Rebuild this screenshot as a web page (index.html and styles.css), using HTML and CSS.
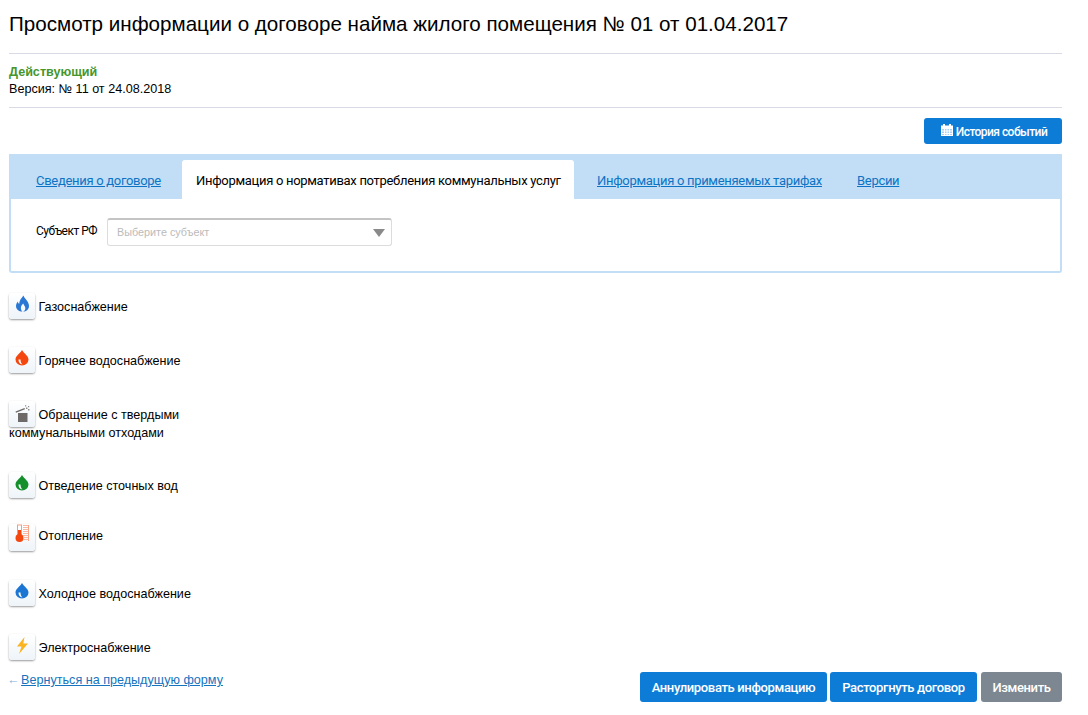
FILE: index.html
```html
<!DOCTYPE html>
<html lang="ru">
<head>
<meta charset="utf-8">
<title>Договор найма</title>
<link rel="stylesheet" href="styles.css">
</head>
<body>
<div class="page">
  <h1 class="title">Просмотр информации о договоре найма жилого помещения № 01 от 01.04.2017</h1>
  <div class="status">
    <div class="status-name">Действующий</div>
    <div class="status-version">Версия: № 11 от 24.08.2018</div>
  </div>
  <div class="actions-top">
    <a class="btn btn-small">
      <svg class="cal" viewBox="0 0 12 12" width="12" height="12"><path fill="#fff" d="M0 1.500h2V0h2v1.500h4V0h2v1.500h2V12H0z"/><path fill="#a9d0f2" d="M1 5h2v1.500H1zM4 5h1.500v1.500H4zM6.500 5H8v1.500H6.500zM9 5h2v1.500H9zM1 7.500h2V9H1zM4 7.500h1.500V9H4zM6.500 7.500H8V9H6.500zM9 7.500h2V9H9zM1 10h2v1H1zM4 10h1.500v1H4zM6.500 10H8v1H6.500zM9 10h2v1H9z"/></svg>
      История событий
    </a>
  </div>
  <section class="panel">
    <nav class="tabs">
      <a class="tab tab-link tab-1">Сведения о договоре</a>
      <span class="tab tab-active">Информация о нормативах потребления коммунальных услуг</span>
      <a class="tab tab-link tab-3">Информация о применяемых тарифах</a>
      <a class="tab tab-link tab-4">Версии</a>
    </nav>
    <div class="panel-body">
      <label class="field-label">Субъект РФ</label>
      <div class="select">
        <span class="select-text">Выберите субъект</span>
        <span class="select-arrow"></span>
      </div>
    </div>
  </section>
  <ul class="services">
    <li class="service">
      <span class="icon"><svg viewBox="0 0 26 26" width="26" height="26"><path fill="#2a78d4" d="M14.500 2.500c.5 3 5.500 5.500 5.500 10.500 0 3.300-2.500 5.500-6 5.800 1.700-1 2.700-2.600 2.200-4.600-.4-1.300-1.400-2.200-2-3.700-1.200 1.200-2.400 2.800-2.300 4.700.1 1.500.7 2.800 1.600 3.600C9.800 18.500 7 16.300 7 13c0-1.800 1-3.300 1.800-4.600.2 1.100.6 1.800 1.400 2.400C10.300 7.500 12.500 5 14.500 2.500z"/></svg></span>
      <span class="service-name">Газоснабжение</span>
    </li>
    <li class="service">
      <span class="icon"><svg viewBox="0 0 26 26" width="26" height="26"><path fill="#f4470f" d="M13 3c2.500 4 6.500 6 6.500 9.500a6.500 6 0 0 1-13 0C6.500 9 10.500 7 13 3z"/><path fill="#fff" d="M9.500 12.500c0 3 1.500 4.500 4 5-1.500-1.200-2-2.800-2-5z"/></svg></span>
      <span class="service-name">Горячее водоснабжение</span>
    </li>
    <li class="service">
      <span class="icon"><svg viewBox="0 0 26 26" width="26" height="26"><path fill="#6e6a6a" d="M9 12h9.500v9H9z"/><path fill="#6e6a6a" d="M6.500 10.500 15.500 7l.5 1.300-9 3.500z"/><path fill="#8f8b8b" d="M17 6.500h1.500V8H17zM19 8h1.500v1.500H19zM19 5h1.200v1.200H19zM16 4.200h1.200v1.200H16z"/></svg></span>
      <span class="service-name">Обращение с твердыми коммунальными отходами</span>
    </li>
    <li class="service">
      <span class="icon"><svg viewBox="0 0 26 26" width="26" height="26"><path fill="#14902b" d="M13 3c2.500 4 6.500 6 6.500 9.500a6.500 6 0 0 1-13 0C6.500 9 10.500 7 13 3z"/><path fill="#fff" d="M9.500 12.500c0 3 1.500 4.500 4 5-1.500-1.200-2-2.800-2-5z"/></svg></span>
      <span class="service-name">Отведение сточных вод</span>
    </li>
    <li class="service s-heat">
      <span class="icon"><svg viewBox="0 0 26 26" width="26" height="26"><rect x="8.500" y="1" width="4" height="10" fill="#fff" stroke="#f79b7c"/><rect x="9" y="6" width="3" height="7" fill="#f4470f"/><circle cx="10.500" cy="14" r="4" fill="#f4470f"/><path stroke="#f9b9a4" stroke-width="5" stroke-dasharray="1 1" fill="none" d="M16.500 1v16"/><path stroke="#f9a58a" stroke-width="1" fill="none" d="M19.500 1v16"/></svg></span>
      <span class="service-name">Отопление</span>
    </li>
    <li class="service">
      <span class="icon"><svg viewBox="0 0 26 26" width="26" height="26"><path fill="#1a76d2" d="M13 3c2.500 4 6.500 6 6.500 9.500a6.500 6 0 0 1-13 0C6.500 9 10.500 7 13 3z"/><path fill="#fff" d="M9.500 12.500c0 3 1.500 4.500 4 5-1.500-1.200-2-2.800-2-5z"/></svg></span>
      <span class="service-name">Холодное водоснабжение</span>
    </li>
    <li class="service">
      <span class="icon"><svg viewBox="0 0 26 26" width="26" height="26"><path fill="#fbb321" d="M15.500 3 8 12.500h4.500L10 20l9-10.500h-4.700z"/></svg></span>
      <span class="service-name">Электроснабжение</span>
    </li>
  </ul>
  <footer class="footer">
    <div class="back"><span class="back-arrow">←</span> <a class="back-link">Вернуться на предыдущую форму</a></div>
    <div class="footer-buttons">
      <a class="btn btn-large btn-annul">Аннулировать информацию</a>
      <a class="btn btn-large btn-cancel">Расторгнуть договор</a>
      <a class="btn btn-large btn-grey">Изменить</a>
    </div>
  </footer>
</div>
</body>
</html>
```
FILE: styles.css
```css
* { box-sizing: border-box; }
html, body { margin: 0; padding: 0; background: #fff; }
body { font-family: "Liberation Sans", Arial, sans-serif; font-size: 12.600px; color: #000; }
.page { width: 1062px; height: 715px; padding-left: 9px; overflow: hidden; }
.title {
  margin: 0; height: 54px; padding-top: 10px;
  font: 400 20.600px/28px "Liberation Sans", sans-serif; color: #000;
  border-bottom: 1px solid #d8dbe3;
}
.status { height: 54px; padding-top: 10px; border-bottom: 1px solid #d8dbe3; line-height: 17px; }
.status-name { font-weight: 700; color: #45962c; }
.actions-top { display: flex; justify-content: flex-end; padding-top: 10px; height: 46px; }
.btn {
  display: inline-flex; align-items: center; justify-content: center;
  background: #0d7cd7; color: #fff; border-radius: 3px;
  font-family: Roboto, sans-serif; font-weight: 500;
}
.btn-small { width: 138px; height: 26px; padding: 1px 0 0 2px; font-size: 12px; letter-spacing: -0.55px; gap: 3px; }
.cal { display: block; margin-top: -3px; }
.panel { height: 119px; border: 2px solid #c1def6; border-top: 0; border-radius: 0 0 3px 3px; }
.tabs {
  display: flex; align-items: flex-end; height: 45px; background: #c1def6;
  margin: 0 -2px;
  font-family: Roboto, sans-serif; font-size: 13px; letter-spacing: -0.3px;
}
.tab { height: 39px; line-height: 41px; white-space: nowrap; }
.tab-link { color: #0d74c4; text-decoration: underline; }
.tab-1 { margin-left: 27px; width: 146px; }
.tab-active { background: #fff; width: 392px; padding-left: 14px; border-radius: 3px 3px 0 0; color: #000; }
.tab-3 { margin-left: 23px; width: 260px; }
.panel-body { display: flex; align-items: center; padding: 19px 0 0 25px; }
.field-label { font-family: Roboto, sans-serif; font-size: 12px; letter-spacing: -0.5px; width: 71px; margin-top: -2px; }
.select {
  display: flex; align-items: center; justify-content: space-between;
  width: 285px; height: 28px; padding: 0 6px 2px 9px;
  border: 1px solid #dcdcdc; border-top: 2px solid #c4c4c4; border-radius: 3px;
}
.select-text { font-size: 10.800px; color: #bbb; }
.select-arrow { width: 0; height: 0; margin-top: 2px; border-left: 6px solid transparent; border-right: 6px solid transparent; border-top: 8px solid #8a8a8a; }
.services { list-style: none; margin: 0; padding: 20px 0 0; width: 190px; line-height: 17px; }
.service { margin-bottom: 30px; }
.service:last-child { margin-bottom: 0; }
.icon {
  display: inline-block; vertical-align: -6px; width: 26px; height: 26px; margin-bottom: -2px;
  border-radius: 3px; background: linear-gradient(#fff, #eef4f9);
  box-shadow: 0 1px 2px rgba(0,0,0,.4);
}
.icon svg { display: block; }
.s-heat { margin-top: -2px; margin-bottom: 29px; }
.s-heat .icon { height: 27px; vertical-align: -11px; margin-bottom: 0; }
.footer { display: flex; justify-content: space-between; align-items: flex-start; padding-top: 14px; }
.back { padding-top: 1px; color: #7fb0dc; }
.back-arrow { margin-left: -2px; }
.back-link { margin-left: -2px; color: #1673bd; text-decoration: underline; }
.footer-buttons { display: flex; gap: 3px; }
.btn-large { height: 30px; padding-top: 1px; font-size: 13px; letter-spacing: -0.35px; }
.btn-annul { width: 187px; }
.btn-cancel { width: 147px; margin-right: 1px; }
.btn-grey { background: #7c8791; width: 81px; }
```
